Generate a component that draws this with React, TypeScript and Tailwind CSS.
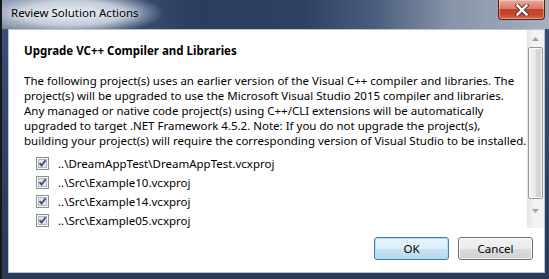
/**
 * Review Solution Actions dialog (Windows 7 style)
 */

const projects = [
  "..\\DreamAppTest\\DreamAppTest.vcxproj",
  "..\\Src\\Example10.vcxproj",
  "..\\Src\\Example14.vcxproj",
  "..\\Src\\Example05.vcxproj",
];

const message = [
  "The following project(s) uses an earlier version of the Visual C++ compiler and libraries. The",
  "project(s) will be upgraded to use the Microsoft Visual Studio 2015 compiler and libraries.",
  "Any managed or native code project(s) using C++/CLI extensions will be automatically",
  "upgraded to target .NET Framework 4.5.2. Note: If you do not upgrade the project(s),",
  "building your project(s) will require the corresponding version of Visual Studio to be installed.",
];

function CloseButton() {
  return (
    <div className="mr-[4px] ml-auto flex h-[20px] w-[47px] items-center justify-center rounded-b-[4px] border border-t-0 border-[#5a1f17] bg-[linear-gradient(180deg,#e8a99d_0%,#d97a69_45%,#c4412b_50%,#c7442c_75%,#d76b4c_100%)] shadow-[inset_0_0_0_1px_rgba(255,255,255,0.35)]">
      <svg width="14" height="12" viewBox="0 0 14 12">
        <path d="M2.5 1.5 L11.5 10.5 M11.5 1.5 L2.5 10.5" stroke="#4a3b3b" strokeWidth="4.2" strokeLinecap="square" />
        <path d="M2.5 1.5 L11.5 10.5 M11.5 1.5 L2.5 10.5" stroke="#ffffff" strokeWidth="2.4" strokeLinecap="square" />
      </svg>
    </div>
  );
}

function CheckBox() {
  return (
    <svg width="13" height="13" viewBox="0 0 13 13" className="shrink-0">
      <rect x="0.5" y="0.5" width="12" height="12" fill="#f6f6f6" stroke="#8e8f8f" />
      <rect x="2.5" y="2.5" width="8" height="8" fill="#e4e6ea" stroke="#b4b8be" />
      <path d="M3.6 6.2 L5.6 8.6 L9.6 3.2" stroke="#3b4a85" strokeWidth="1.8" fill="none" />
    </svg>
  );
}

function ScrollBar() {
  return (
    <div className="flex w-[17px] shrink-0 flex-col items-center bg-[linear-gradient(90deg,#e5e5e5_0%,#f3f3f3_40%,#f3f3f3_100%)]">
      <div className="flex h-[17px] w-full items-center justify-center">
        <svg width="7" height="4" viewBox="0 0 7 4">
          <path d="M0 4 L3.5 0 L7 4 Z" fill="#a4a4a4" />
        </svg>
      </div>
      <div className="mx-[1px] h-[152px] w-[15px] rounded-[2px] border border-[#979797] bg-[linear-gradient(90deg,#f3f3f3_0%,#e8e8e8_50%,#d6d6d6_55%,#d2d2d2_100%)] shadow-[inset_0_0_0_1px_rgba(255,255,255,0.8)]" />
      <div className="flex h-[17px] w-full items-center justify-center pt-[6px]">
        <svg width="7" height="4" viewBox="0 0 7 4">
          <path d="M0 0 L7 0 L3.5 4 Z" fill="#a4a4a4" />
        </svg>
      </div>
    </div>
  );
}

export default function App() {
  return (
    <div className="flex h-[279px] w-[549px] flex-col overflow-hidden border-l-2 border-[#15191f] bg-[linear-gradient(180deg,#3c5174_0%,#2f4263_60%,#2a3a57_100%)] font-['Noto_Sans',sans-serif] text-[11.5px] leading-[15px] text-black">
      {/* 标题栏 */}
      <div className="flex h-[29px] shrink-0 items-start bg-[radial-gradient(ellipse_92px_22px_at_70px_13px,rgba(236,240,246,0.97)_0%,rgba(214,222,232,0.85)_55%,rgba(214,222,232,0)_100%),linear-gradient(90deg,#7f8ea5_0%,#3d5174_22%,#2b3d5c_36%,#2e4161_55%,#4b5d7c_68%,#8794a9_82%,#a5b0bf_100%)] pl-[9px]">
        <span className="pt-[5px] [text-shadow:0_0_6px_rgba(255,255,255,0.9)]">Review Solution Actions</span>
        <CloseButton />
      </div>

      {/* 内容区 */}
      <div className="flex flex-1 flex-col pb-[6px] pl-[6px] pr-[4px]">
        <div className="flex flex-1 flex-col border border-[#b9c4d3] bg-white">
          <div className="flex h-[198px] shrink-0">
            <div className="flex-1 overflow-hidden pl-[15px] pt-[13px]">
              <h1 className="font-bold">Upgrade VC++ Compiler and Libraries</h1>
              <div className="mt-[15px]">
                {message.map((line) => (
                  <div key={line} className="whitespace-nowrap">
                    {line}
                  </div>
                ))}
              </div>
              <div className="mt-[6px]">
                {projects.map((p) => (
                  <div key={p} className="flex h-[19px] items-center pl-[12px]">
                    <CheckBox />
                    <span className="ml-[9px] whitespace-nowrap">{p}</span>
                  </div>
                ))}
              </div>
            </div>
            <ScrollBar />
          </div>

          {/* 按钮 */}
          <div className="flex justify-end gap-[9px] pr-[11px] pt-[9px]">
            <button
              type="button"
              className="h-[23px] w-[75px] rounded-[3px] border border-[#3c7fb1] bg-[linear-gradient(180deg,#eaf5fc_0%,#dcedf8_50%,#c9e3f3_51%,#b9d9ee_100%)] shadow-[inset_0_0_0_1px_#a9e1f7]"
            >
              OK
            </button>
            <button
              type="button"
              className="h-[23px] w-[75px] rounded-[3px] border border-[#707070] bg-[linear-gradient(180deg,#f2f2f2_0%,#ebebeb_50%,#dddddd_51%,#cfcfcf_100%)] shadow-[inset_0_0_0_1px_rgba(255,255,255,0.7)]"
            >
              Cancel
            </button>
          </div>
        </div>
      </div>
    </div>
  );
}
